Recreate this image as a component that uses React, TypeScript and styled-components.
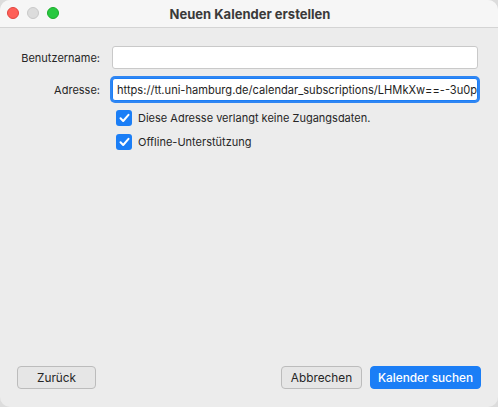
import React from "react";
import styled, { createGlobalStyle } from "styled-components";

const GlobalStyle = createGlobalStyle`
  html, body {
    margin: 0;
    padding: 0;
    background: #dcdcdc;
  }
  * {
    box-sizing: border-box;
  }
`;

const Window = styled.div`
  width: 498px;
  height: 407px;
  display: flex;
  flex-direction: column;
  background: #ececec;
  border-radius: 10px;
  overflow: hidden;
  font-family: Inter, "Liberation Sans", sans-serif;
  font-size: 11px;
  color: #262626;
`;

const TitleBar = styled.div`
  position: relative;
  height: 28px;
  flex: 0 0 28px;
  display: flex;
  align-items: center;
  justify-content: center;
  background: #f6f6f6;
  border-bottom: 1px solid #d4d4d4;
`;

const Lights = styled.div`
  position: absolute;
  left: 7px;
  top: 7px;
  display: flex;
  gap: 8px;
`;

const Light = styled.span<{ $color: string; $edge: string }>`
  width: 12px;
  height: 12px;
  border-radius: 50%;
  background: ${(p) => p.$color};
  border: 1px solid ${(p) => p.$edge};
`;

const Title = styled.div`
  font-weight: 700;
  font-size: 13px;
  color: #3a3a3a;
  margin-left: 2px;
`;

const Body = styled.div`
  flex: 1;
  display: flex;
  flex-direction: column;
  justify-content: space-between;
  padding: 18px 17px 18px 17px;
`;

const Form = styled.div`
  display: grid;
  grid-template-columns: 83px 1fr;
  column-gap: 12px;
  row-gap: 9px;
  align-items: center;
  padding-right: 3px;
`;

const Label = styled.div`
  text-align: right;
`;

const Field = styled.div<{ $focused?: boolean }>`
  height: 23px;
  background: #fff;
  border: 1px solid ${(p) => (p.$focused ? "#1b7ef6" : "#c9c9c9")};
  box-shadow: ${(p) => (p.$focused ? "0 0 0 2px #2f86f3" : "none")};
  border-radius: 3px;
  padding: 0 3px 0 4px;
  display: flex;
  align-items: center;
  white-space: nowrap;
  overflow: hidden;
  color: #1e1e1e;
  font-size: 11.1px;
`;

const Caret = styled.span`
  display: inline-block;
  width: 1px;
  height: 15px;
  background: #111;
  vertical-align: middle;
`;

const Checks = styled.div`
  grid-column: 2;
  display: flex;
  flex-direction: column;
  gap: 8px;
  padding-left: 4px;
`;

const CheckRow = styled.label`
  display: flex;
  align-items: center;
  gap: 6px;
`;

const Box = styled.span`
  width: 16px;
  height: 16px;
  border-radius: 3px;
  background: #1b7ef6;
  display: flex;
  align-items: center;
  justify-content: center;
`;

const Footer = styled.div`
  display: flex;
  align-items: center;
  gap: 8px;
`;

const Spacer = styled.div`
  flex: 1;
`;

const Button = styled.button<{ $primary?: boolean; $width: number }>`
  width: ${(p) => p.$width}px;
  height: 23px;
  border-radius: 4px;
  font-family: inherit;
  font-size: 11.8px;
  padding: 0;
  cursor: default;
  background: ${(p) => (p.$primary ? "#1b7ef6" : "#e6e6e6")};
  color: ${(p) => (p.$primary ? "#fff" : "#262626")};
  border: 1px solid ${(p) => (p.$primary ? "#1b7ef6" : "#bcbcbc")};
  font-weight: ${(p) => (p.$primary ? 500 : 400)};
`;

function Check({ children }: { children: React.ReactNode }) {
  return (
    <CheckRow>
      <Box>
        <svg width="11" height="10" viewBox="0 0 11 10">
          <path d="M1.5 5.2 L4.2 8 L9.5 1.8" fill="none" stroke="#fff" strokeWidth="2" strokeLinecap="round" strokeLinejoin="round" />
        </svg>
      </Box>
      {children}
    </CheckRow>
  );
}

export default function App() {
  return (
    <>
      <GlobalStyle />
      <Window>
        <TitleBar>
          <Lights>
            <Light $color="#fe5f57" $edge="#e0443e" />
            <Light $color="#dcdcdc" $edge="#c8c8c8" />
            <Light $color="#28c840" $edge="#1aab29" />
          </Lights>
          <Title>Neuen Kalender erstellen</Title>
        </TitleBar>
        <Body>
          <Form>
            <Label>Benutzername:</Label>
            <Field />
            <Label>Adresse:</Label>
            <Field $focused>
              https://tt.uni-hamburg.de
              <Caret />
              /calendar_subscriptions/LHMkXw==--3u0p
            </Field>
            <Checks>
              <Check>Diese Adresse verlangt keine Zugangsdaten.</Check>
              <Check>Offline-Unterstützung</Check>
            </Checks>
          </Form>
          <Footer>
            <Button $width={79}>Zurück</Button>
            <Spacer />
            <Button $width={81}>Abbrechen</Button>
            <Button $primary $width={111}>Kalender suchen</Button>
          </Footer>
        </Body>
      </Window>
    </>
  );
}
